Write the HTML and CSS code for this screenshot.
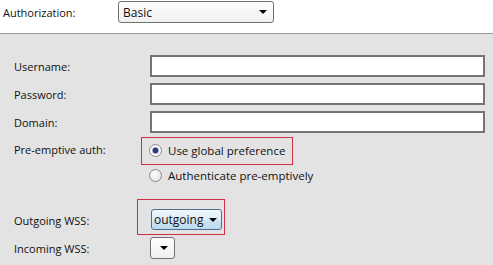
FILE: index.html
```html
<!DOCTYPE html>
<html>
  <head>
    <meta charset="UTF-8">
    <title>Authorization</title>
    <link rel="stylesheet" href="styles.css">
  </head>
  <body>
    <div class="auth-bar">
      <span class="auth-label">Authorization:</span>
      <div class="dropdown dropdown-wide">
        <span class="dropdown-value">Basic</span>
        <span class="dropdown-arrow"></span>
      </div>
    </div>

    <div class="panel">
      <div class="row">
        <span class="label">Username:</span>
        <div class="textbox"></div>
      </div>
      <div class="row">
        <span class="label">Password:</span>
        <div class="textbox"></div>
      </div>
      <div class="row">
        <span class="label">Domain:</span>
        <div class="textbox"></div>
      </div>

      <div class="row row-radio">
        <span class="label">Pre-emptive auth:</span>
        <div class="radios">
          <div class="highlight highlight-radio">
            <label class="radio"><span class="radio-dot checked"></span>Use global preference</label>
          </div>
          <label class="radio radio-plain"><span class="radio-dot"></span>Authenticate pre-emptively</label>
        </div>
      </div>

      <div class="row row-wss">
        <span class="label">Outgoing WSS:</span>
        <div class="highlight highlight-select">
          <div class="dropdown dropdown-focus">
            <span class="dropdown-value">outgoing</span>
            <span class="dropdown-arrow"></span>
          </div>
        </div>
      </div>
      <div class="row row-incoming">
        <span class="label">Incoming WSS:</span>
        <div class="dropdown dropdown-empty">
          <span class="dropdown-arrow"></span>
        </div>
      </div>
    </div>
  </body>
</html>
```

FILE: styles.css
```css
body {
  margin: 0;
  font-family: 'Open Sans', 'Noto Sans', sans-serif;
  font-size: 11px;
  color: #111;
  background: #fff;
}

.auth-bar {
  display: flex;
  align-items: flex-start;
  height: 33px;
  padding-left: 3px;
  border-bottom: 1px solid #9a9a9a;
}

.auth-label {
  width: 115px;
  margin-top: 5px;
}

.panel {
  box-sizing: border-box;
  height: 231px;
  padding: 21px 8px 0 14px;
  background: #e3e3e3;
  overflow: hidden;
}

.row {
  display: flex;
  align-items: center;
  height: 22px;
  margin-bottom: 6px;
}

.label {
  width: 136px;
  flex: none;
}

.textbox {
  flex: 1;
  height: 18px;
  background: #fff;
  border: 2px solid #747474;
}

/* dropdowns */

.dropdown {
  display: flex;
  align-items: center;
  justify-content: space-between;
  box-sizing: border-box;
  height: 22px;
  padding: 0 6px 0 4px;
  border: 1px solid #707070;
  border-radius: 3px;
  background: linear-gradient(#fdfdfd, #f0f0f0);
}

.dropdown-wide {
  width: 156px;
  margin-top: 1px;
}

.dropdown-value {
  font-size: 12px;
}

.dropdown-arrow {
  width: 0;
  height: 0;
  border-left: 4px solid transparent;
  border-right: 4px solid transparent;
  border-top: 4px solid #000;
}

.dropdown-focus {
  width: 71px;
  height: 21px;
  padding: 0 4px 0 2px;
  border-color: #4a6f8f;
  background: linear-gradient(#eef6fb, #dfeef8 50%, #cfe5f4 51%, #bcd9ee);
}

.dropdown-empty {
  width: 25px;
  justify-content: flex-end;
  padding-right: 6px;
}

/* red annotation boxes */

.highlight {
  border: 1px solid #d03040;
}

.highlight-radio {
  box-sizing: border-box;
  width: 152px;
  margin-left: -9px;
  padding: 5px 0 7px 7px;
}

.highlight-select {
  margin-left: -13px;
  padding: 9px 2px 4px 13px;
}

/* radios */

.row-radio {
  align-items: flex-start;
  height: auto;
  margin-top: -2px;
  margin-bottom: 0;
}

.row-radio .label {
  margin-top: 5px;
}

.radio {
  display: flex;
  align-items: center;
  gap: 6px;
  height: 14px;
  font-size: 11.5px;
  white-space: nowrap;
}

.radio-plain {
  margin-top: 3px;
  margin-left: -1px;
}

.radio-dot {
  box-sizing: border-box;
  width: 13px;
  height: 13px;
  border: 1px solid #8a8a8a;
  border-radius: 50%;
  background: radial-gradient(circle at 40% 35%, #fff, #e4e4e4 80%);
}

.radio-dot.checked {
  background: radial-gradient(circle, #2a3c78 0 2.5px, #9aa6c8 3px, #fff 4px, #e6e6e6 100%);
}

/* WSS rows */

.row-wss {
  align-items: flex-start;
  height: auto;
  margin-top: 17px;
  margin-bottom: 2px;
}

.row-wss .label {
  margin-top: 14px;
}
```
